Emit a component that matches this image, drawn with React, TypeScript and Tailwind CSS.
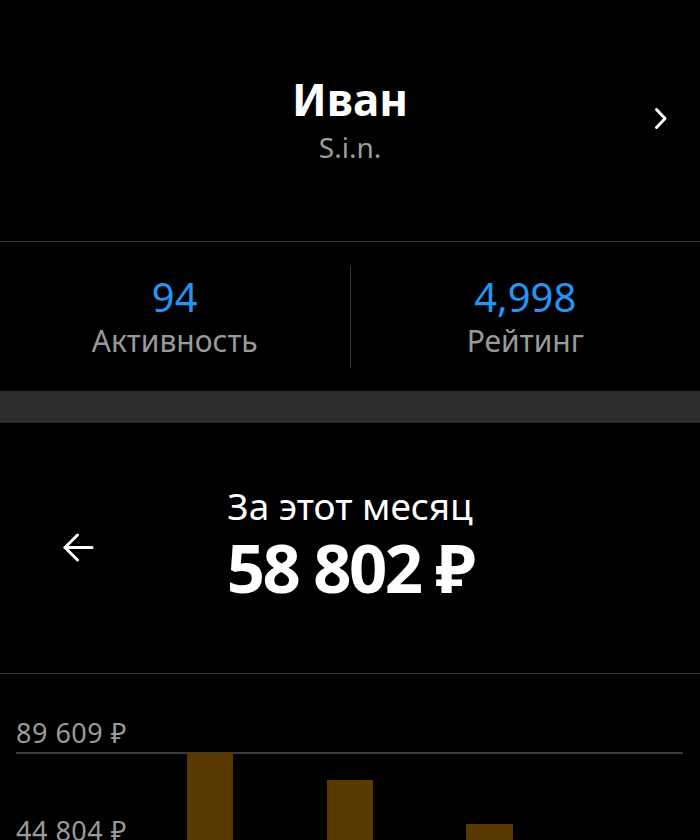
import React from "react";

export default function App() {
  return (
    <div
      className="w-[700px] h-[840px] overflow-hidden bg-black text-white"
      style={{ fontFamily: '"Noto Sans", "Open Sans", sans-serif' }}
    >
      {/* Profile header */}
      <div className="grid grid-cols-[1fr_auto_1fr] items-center h-[242px] border-b border-[#3a3a3a] pb-[4px]">
        <div />
        <div className="flex flex-col items-center">
          <div className="text-[44px] leading-[48px] font-bold">Иван</div>
          <div className="mt-[8px] text-[28px] leading-[32px] text-[#9e9e9e]">S.i.n.</div>
        </div>
        <div className="flex justify-end pr-[32px]">
          <svg width="14" height="23" viewBox="0 0 14 23" fill="none">
            <polyline
              points="2.5,2.5 11,11.5 2.5,20.5"
              stroke="white"
              strokeWidth="3"
              strokeLinecap="round"
              strokeLinejoin="round"
            />
          </svg>
        </div>
      </div>

      {/* Stats */}
      <div className="flex items-center h-[149px]">
        <div className="flex-1 flex flex-col items-center">
          <div className="text-[40px] leading-[44px] text-[#2196f3]">94</div>
          <div className="mt-[5px] text-[30px] leading-[34px] text-[#9a9a9a]">Активность</div>
        </div>
        <div className="w-px h-[102px] bg-[#3a3a3a]" />
        <div className="flex-1 flex flex-col items-center">
          <div className="text-[40px] leading-[44px] text-[#2196f3]">4,998</div>
          <div className="mt-[5px] text-[30px] leading-[34px] text-[#9a9a9a]">Рейтинг</div>
        </div>
      </div>

      {/* Separator band */}
      <div className="h-[32px] bg-[#2d2d2d]" />

      {/* Month earnings */}
      <div className="grid grid-cols-[1fr_auto_1fr] items-center h-[251px] border-b border-[#3a3a3a] pb-[8px]">
        <div className="flex pl-[62px] pt-[6px]">
          <svg width="32" height="31" viewBox="0 0 32 31" fill="none">
            <line x1="3" y1="15.5" x2="30" y2="15.5" stroke="white" strokeWidth="3" strokeLinecap="round" />
            <polyline
              points="15.5,3 3,15.5 15.5,28"
              stroke="white"
              strokeWidth="3"
              strokeLinecap="round"
              strokeLinejoin="round"
            />
          </svg>
        </div>
        <div className="flex flex-col items-center">
          <div className="text-[37px] leading-[40px]">За этот месяц</div>
          <div className="mt-[6px] text-[67px] leading-[70px] font-bold tracking-[-2.5px]">
            58 802 ₽
          </div>
        </div>
        <div />
      </div>

      {/* Chart */}
      <div className="relative h-[166px] overflow-hidden">
        <div className="absolute left-[16px] top-[44px] text-[27px] leading-[30px] tracking-[0.5px] text-[#9a9a9a]">
          89 609 ₽
        </div>
        <div className="absolute left-[16px] right-[17px] top-[78px] h-[2px] bg-[#3c3c3c]" />
        <div className="absolute left-[16px] top-[142px] text-[27px] leading-[30px] tracking-[0.5px] text-[#9a9a9a]">
          44 804 ₽
        </div>
        <div className="absolute left-[187px] top-[79px] w-[46px] h-[200px] bg-[#5a3a00]" />
        <div className="absolute left-[327px] top-[106px] w-[46px] h-[200px] bg-[#5a3a00]" />
        <div className="absolute left-[466px] top-[150px] w-[47px] h-[200px] bg-[#5a3a00]" />
      </div>
    </div>
  );
}
